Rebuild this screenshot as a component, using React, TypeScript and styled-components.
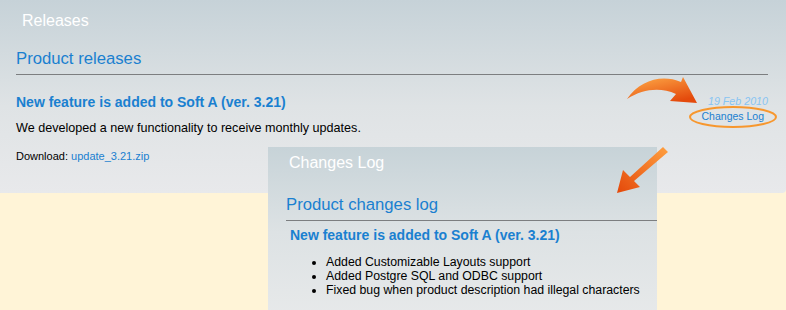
import React from "react";
import styled, { createGlobalStyle } from "styled-components";

const Global = createGlobalStyle`
  html, body { margin: 0; padding: 0; }
  body { background: #fff4d7; font-family: Tahoma, "Liberation Sans", sans-serif; }
`;

const Page = styled.div`
  position: relative;
  width: 786px;
  height: 310px;
  overflow: hidden;
  background: #fff4d7;
  font-family: Tahoma, "Liberation Sans", sans-serif;
`;

const Panel = styled.section`
  height: 193px;
  box-sizing: border-box;
  padding: 11px 18px 0 16px;
  background: linear-gradient(to bottom, #c6d2d8 0%, #dfe3e5 55%, #e8e9eb 100%);
  border-bottom-right-radius: 4px;
`;

const Title = styled.div<{ $indent?: number }>`
  color: #ffffff;
  font-size: 16px;
  line-height: 20px;
  padding-left: ${(p) => p.$indent ?? 6}px;
`;

const Heading = styled.h2`
  margin: 0;
  color: #1a80d0;
  font-weight: normal;
  font-size: 16.7px;
  line-height: 20px;
  padding-bottom: 5px;
  border-bottom: 1px solid #7c7e80;
`;

const ItemTitle = styled.h3<{ $indent?: number }>`
  margin: 0;
  color: #1a80d0;
  font-size: 14px;
  font-weight: bold;
  line-height: 16px;
  padding-left: ${(p) => p.$indent ?? 0}px;
`;

const Text = styled.p`
  margin: 0;
  color: #000;
  font-size: 12.6px;
  line-height: 16px;
`;

const Small = styled.p`
  margin: 0;
  color: #000;
  font-size: 11px;
  line-height: 14px;
`;

const Link = styled.a`
  color: #1a80d0;
  text-decoration: none;
`;

const Row = styled.div`
  display: flex;
  justify-content: space-between;
  align-items: flex-start;
`;

const Column = styled.div`
  display: flex;
  flex-direction: column;
`;

const Meta = styled.div`
  display: flex;
  flex-direction: column;
  align-items: flex-end;
  margin-top: 1px;
`;

const DateText = styled.span`
  color: #88c4f2;
  font-style: italic;
  font-size: 10.7px;
  line-height: 13px;
`;

const LogLink = styled.a`
  color: #1a80d0;
  font-size: 10.5px;
  line-height: 16px;
  text-decoration: none;
  margin-right: 4px;
`;

const Spacer = styled.div<{ $h: number }>`
  height: ${(p) => p.$h}px;
`;

const Popup = styled.section`
  position: absolute;
  left: 268px;
  top: 147px;
  width: 389px;
  height: 170px;
  box-sizing: border-box;
  padding: 6px 0 0 18px;
  background: linear-gradient(to bottom, #c7d3d8 0%, #dde2e4 50%, #e7e9ea 100%);
`;

const List = styled.ul`
  margin: 0;
  padding-left: 40px;
  font-size: 12.3px;
  line-height: 14px;
  color: #000;
`;

const Overlay = styled.svg`
  position: absolute;
  left: 0;
  top: 0;
  pointer-events: none;
`;

export default function App() {
  return (
    <>
      <Global />
      <Page>
        <Panel>
          <Title>Releases</Title>
          <Spacer $h={18} />
          <Heading>Product releases</Heading>
          <Spacer $h={19} />
          <Row>
            <Column>
              <ItemTitle>New feature is added to Soft A (ver. 3.21)</ItemTitle>
              <Spacer $h={10} />
              <Text>We developed a new functionality to receive monthly updates.</Text>
              <Spacer $h={13} />
              <Small>
                Download: <Link href="#">update_3.21.zip</Link>
              </Small>
            </Column>
            <Meta>
              <DateText>19 Feb 2010</DateText>
              <LogLink href="#">Changes Log</LogLink>
            </Meta>
          </Row>
        </Panel>
        <Popup>
          <Title $indent={3}>Changes Log</Title>
          <Spacer $h={22} />
          <Heading>Product changes log</Heading>
          <Spacer $h={6} />
          <ItemTitle $indent={4}>New feature is added to Soft A (ver. 3.21)</ItemTitle>
          <Spacer $h={12} />
          <List>
            <li>Added Customizable Layouts support</li>
            <li>Added Postgre SQL and ODBC support</li>
            <li>Fixed bug when product description had illegal characters</li>
          </List>
        </Popup>
        <Overlay width="786" height="310" viewBox="0 0 786 310">
          <defs>
            <linearGradient id="curve" x1="0" y1="0" x2="0.6" y2="1">
              <stop offset="0" stopColor="#ffae4a" />
              <stop offset="1" stopColor="#e44a0c" />
            </linearGradient>
            <linearGradient id="straight" x1="1" y1="0" x2="0" y2="1">
              <stop offset="0" stopColor="#ffa040" />
              <stop offset="1" stopColor="#e4480a" />
            </linearGradient>
          </defs>
          <path
            d="M627,99 C640,80 662,74 681,82 L683,77 L697,103 L670,101 L676,94 C660,87 643,89 627,99 Z"
            fill="url(#curve)"
          />
          <ellipse cx="733" cy="117" rx="43" ry="10" fill="none" stroke="#f7972e" strokeWidth="2" />
          <path
            d="M668,152 L663,147 L630,177 L623,170 L617,193 L640,187 L634,181 Z"
            fill="url(#straight)"
          />
        </Overlay>
      </Page>
    </>
  );
}
